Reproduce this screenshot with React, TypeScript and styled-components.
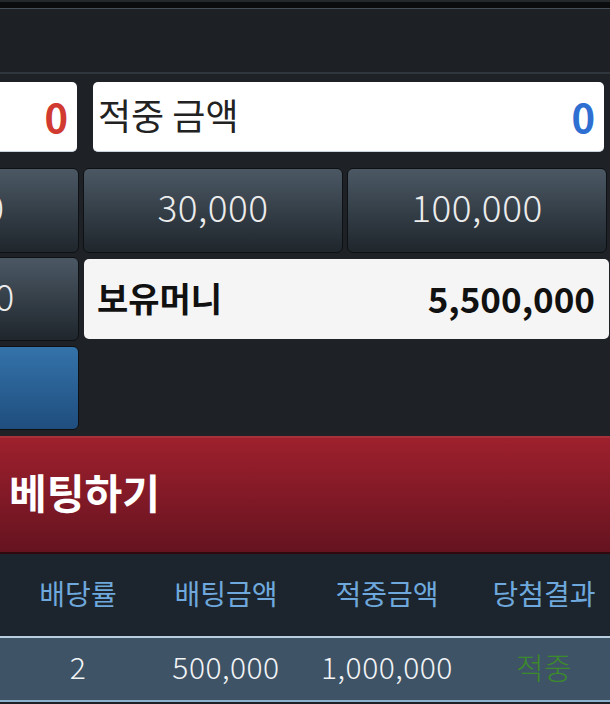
import React from 'react'
import styled, { createGlobalStyle } from 'styled-components'

const GlobalStyle = createGlobalStyle`
    html, body {
        margin: 0;
        padding: 0;
        background: #1e2227;
        overflow: hidden;
    }
    body {
        font-family: "Noto Sans CJK KR", "Noto Sans", sans-serif;
    }
`

const Screen = styled.div`
    width: 610px;
    height: 704px;
    overflow: hidden;
    background: #1e2227;
`

const StatusStrip = styled.div`
    height: 6px;
    background: #0b0c0d;
    border-top: 2px solid #26292c;
    border-bottom: 1px solid #444e58;
`

const Header = styled.div`
    height: 63px;
    background: #1d2126;
    border-bottom: 2px solid #30363d;
`

// the bet panel is wider than the screen, its first column sits off to the left
const Board = styled.div`
    width: 810px;
    margin-left: -200px;
    padding: 8px 0 6px;
    display: flex;
    flex-direction: column;
`

const Row = styled.div<{ $cols: string; $gap: number; $pl: number; $pr: number; $h: number; $mt: number }>`
    display: grid;
    grid-template-columns: ${p => p.$cols};
    gap: ${p => p.$gap}px;
    padding: 0 ${p => p.$pr}px 0 ${p => p.$pl}px;
    height: ${p => p.$h}px;
    margin-top: ${p => p.$mt}px;
`

const AmountBox = styled.div`
    background: #ffffff;
    border-radius: 5px;
    border-bottom: 1px solid #c9d2e0;
    display: flex;
    align-items: center;
    justify-content: space-between;
    padding: 0 9px 0 5px;
    color: #222;
    line-height: 1;
`

const AmountLabel = styled.span`
    font-size: 36px;
    margin-top: -6px;
`

const AmountValue = styled.span<{ $color: string }>`
    color: ${p => p.$color};
    font-size: 40px;
    font-weight: 700;
    margin-top: -2px;
`

const ChipButton = styled.div<{ $blue?: boolean }>`
    border: 1px solid #0e1113;
    border-radius: 6px;
    background: ${p => p.$blue
        ? 'linear-gradient(to bottom, #3473aa, #1f4d7e)'
        : 'linear-gradient(to bottom, #4b5864, #1f262c)'};
    color: #ececec;
    font-size: 37px;
    font-weight: 300;
    letter-spacing: 0.5px;
    display: flex;
    align-items: center;
    justify-content: center;
    padding-bottom: 9px;
`

const MoneyBox = styled.div`
    margin: 2px 0;
    background: #f5f5f5;
    border-radius: 5px;
    display: flex;
    align-items: center;
    justify-content: space-between;
    padding: 0 14px 4px 13px;
    color: #111;
    font-size: 34px;
    font-weight: 700;
`

const Money = styled.span`
    font-size: 35px;
`

const BetBar = styled.div`
    height: 118px;
    box-sizing: border-box;
    background: linear-gradient(to bottom, #9e202d, #661320);
    border-top: 2px solid #a8303a;
    border-bottom: 2px solid #2e0a0e;
    display: flex;
    align-items: center;
    padding-left: 9px;
    padding-bottom: 8px;
    color: #fff;
    font-size: 41px;
    font-weight: 700;
`

const Table = styled.div`
    display: grid;
    grid-template-columns: 156px 140px 182px 132px;
`

const HeadCell = styled.div`
    height: 84px;
    background: #1c252e;
    color: #6ea8dc;
    font-size: 28px;
    display: flex;
    align-items: center;
    justify-content: center;
    padding-bottom: 5px;
    box-sizing: border-box;
    border-bottom: 2px solid #b7cde0;
`

const BodyCell = styled.div<{ $color?: string }>`
    height: 64px;
    box-sizing: border-box;
    background: #3e5366;
    color: ${p => p.$color || '#f2f4f6'};
    font-size: 30px;
    font-weight: 300;
    letter-spacing: 0.5px;
    display: flex;
    align-items: center;
    justify-content: center;
    border-bottom: 2px solid #8fb3cf;
    padding-bottom: 6px;
`

const heads = ['배당률', '배팅금액', '적중금액', '당첨결과']

export default function App() {
    return (
        <Screen>
            <GlobalStyle />
            <StatusStrip />
            <Header />
            <Board>
                <Row $cols="260px 1fr" $gap={16} $pl={17} $pr={6} $h={70} $mt={0}>
                    <AmountBox>
                        <AmountLabel>배팅 금액</AmountLabel>
                        <AmountValue $color="#d13a30">0</AmountValue>
                    </AmountBox>
                    <AmountBox>
                        <AmountLabel>적중 금액</AmountLabel>
                        <AmountValue $color="#2f6fd2">0</AmountValue>
                    </AmountBox>
                </Row>
                <Row $cols="repeat(3, 260px)" $gap={4} $pl={19} $pr={0} $h={85} $mt={16}>
                    <ChipButton>10,000</ChipButton>
                    <ChipButton>30,000</ChipButton>
                    <ChipButton>100,000</ChipButton>
                </Row>
                <Row $cols="260px 1fr" $gap={5} $pl={19} $pr={1} $h={84} $mt={4}>
                    <ChipButton>500,000</ChipButton>
                    <MoneyBox>
                        <span>보유머니</span>
                        <Money>5,500,000</Money>
                    </MoneyBox>
                </Row>
                <Row $cols="260px 1fr" $gap={5} $pl={19} $pr={1} $h={84} $mt={5}>
                    <ChipButton $blue>초기화</ChipButton>
                </Row>
            </Board>
            <BetBar>베팅하기</BetBar>
            <Table>
                {heads.map(h => <HeadCell key={h}>{h}</HeadCell>)}
                <BodyCell>2</BodyCell>
                <BodyCell>500,000</BodyCell>
                <BodyCell>1,000,000</BodyCell>
                <BodyCell $color="#3d8a2c">적중</BodyCell>
            </Table>
        </Screen>
    )
}
